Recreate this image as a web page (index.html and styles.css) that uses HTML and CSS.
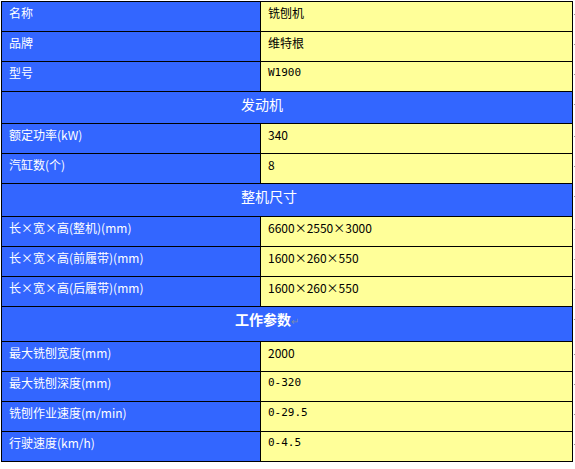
FILE: index.html
```html
<!DOCTYPE html>
<html lang="zh">
<head>
<meta charset="utf-8">
<title>铣刨机参数</title>
<link rel="stylesheet" href="styles.css">
</head>
<body>
<table class="spec">
  <colgroup><col class="c-label"><col class="c-value"></colgroup>
  <tbody>
    <tr><td class="label">名称</td><td class="value">铣刨机</td></tr>
    <tr><td class="label">品牌</td><td class="value">维特根</td></tr>
    <tr><td class="label">型号</td><td class="value num">W1900</td></tr>
    <tr><td class="section" colspan="2">发动机</td></tr>
    <tr><td class="label">额定功率(kW)</td><td class="value">340</td></tr>
    <tr><td class="label">汽缸数(个)</td><td class="value">8</td></tr>
    <tr><td class="section" colspan="2">整机尺寸</td></tr>
    <tr><td class="label">长×宽×高(整机)(mm)</td><td class="value">6600×2550×3000</td></tr>
    <tr><td class="label">长×宽×高(前履带)(mm)</td><td class="value">1600×260×550</td></tr>
    <tr><td class="label">长×宽×高(后履带)(mm)</td><td class="value">1600×260×550</td></tr>
    <tr><td class="section bold" colspan="2">工作参数<span class="mark">↵</span></td></tr>
    <tr><td class="label">最大铣刨宽度(mm)</td><td class="value">2000</td></tr>
    <tr><td class="label">最大铣刨深度(mm)</td><td class="value num">0-320</td></tr>
    <tr><td class="label">铣刨作业速度(m/min)</td><td class="value num">0-29.5</td></tr>
    <tr><td class="label">行驶速度(km/h)</td><td class="value num">0-4.5</td></tr>
  </tbody>
</table>
</body>
</html>
```

FILE: styles.css
```css
html, body {
  margin: 0;
  padding: 0;
  background: #ffffff;
}

body {
  padding: 1px 0 0 1px;
  font-family: "Noto Sans CJK SC", "Noto Sans", sans-serif;
  font-size: 12px;
}

.spec {
  border-collapse: collapse;
  table-layout: fixed;
  width: 572px;
  height: 461px;
}

.c-label { width: 259px; }

.spec td {
  position: relative;
  border: 1px solid #000000;
  vertical-align: top;
  line-height: 16px;
  padding: 3px 7px 0 7px;
  white-space: nowrap;
}

.spec td:last-child::after {
  content: "";
  position: absolute;
  right: -3px;
  top: 12px;
  width: 1px;
  height: 1px;
  background: #9a9a9a;
}

.spec .label {
  background: #3366ff;
  color: #ffffff;
}

.spec .value {
  background: #ffff99;
  color: #000000;
}

.spec .num {
  font-family: "DejaVu Sans Mono", monospace;
  font-size: 11px;
}

.spec .section {
  background: #3366ff;
  color: #ffffff;
  font-size: 14px;
  line-height: 18px;
  padding: 3px 0 0 239px;
}

.spec .section.bold {
  font-weight: bold;
  padding-left: 233px;
}

.mark {
  color: #7a8aa8;
  font-size: 10px;
  font-weight: normal;
}
```
